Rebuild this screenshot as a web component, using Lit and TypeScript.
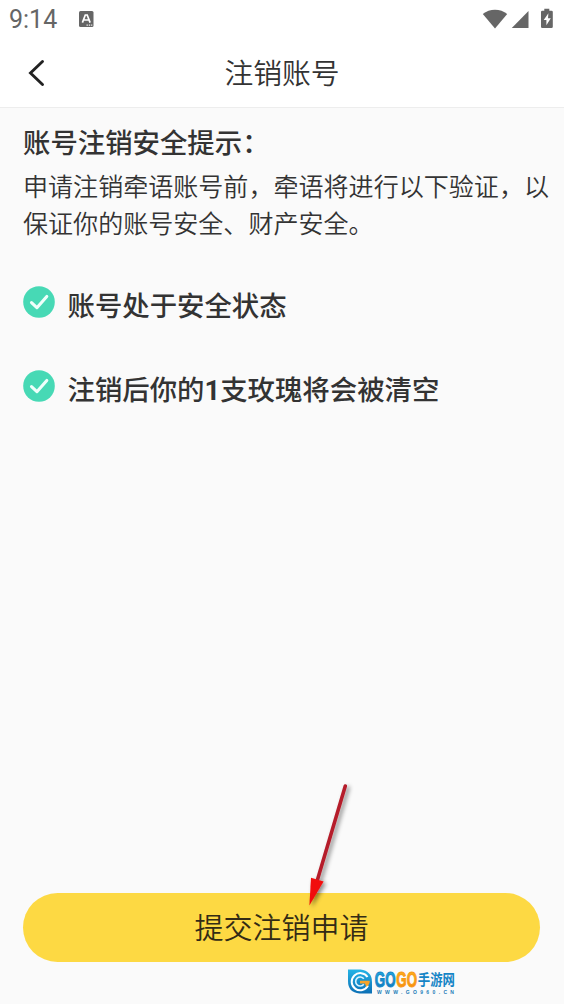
import { LitElement, html, css } from "lit";
import { customElement } from "lit/decorators.js";

@customElement("app-root")
class AppRoot extends LitElement {
  static styles = css`
    :host {
      display: flex;
      flex-direction: column;
      position: relative;
      box-sizing: border-box;
      width: 100%;
      height: 100vh;
      overflow: hidden;
      background: #fafafa;
      color: #333;
      font-family: "Noto Sans CJK SC", "Noto Sans", sans-serif;
    }
    svg { display: block; flex: none; }
    .status {
      display: flex;
      align-items: center;
      height: 38px;
      padding: 0 10px 0 9px;
      background: #fff;
      color: #666;
    }
    .time { font: 25px/38px Roboto, sans-serif; width: 69px; padding-top: 2px; }
    .spacer { flex: 1; }
    .nav {
      display: grid;
      grid-template-columns: 64px 1fr 64px;
      align-items: center;
      height: 69px;
      background: #fff;
      border-bottom: 1px solid #ededed;
    }
    .back { padding-left: 28px; }
    .title { font-size: 28.8px; line-height: 67px; padding-bottom: 2px; text-align: center; font-weight: 350; }
    .content { flex: 1; padding: 13px 12px 0 23px; }
    .strong {
      font-size: 27.4px;
      line-height: 40px;
      font-weight: 500;
      white-space: nowrap;
    }
    .desc { font-size: 25.05px; line-height: 36.6px; font-weight: 350; margin: 6px 0 0; }
    .checks { display: grid; gap: 44px; padding-top: 44px; }
    .check { display: flex; gap: 12.5px; align-items: flex-start; height: 40px; }
    .check svg { margin-top: 2px; }
    .num { font-family: Roboto, sans-serif; font-weight: 700; }
    .submit {
      margin: 0 24px 42px 23px;
      height: 69px;
      border: 0;
      padding: 0 0 2px;
      border-radius: 35px;
      background: #fdd943;
      color: #332b15;
      font: 350 29px/67px "Noto Sans CJK SC", sans-serif;
    }
    .arrow { position: absolute; left: 300px; top: 778px; }
    .mark { position: absolute; left: 346px; top: 966px; }
    .gogo { font: 700 21.5px "Liberation Sans", sans-serif; }
    .cn { font: 700 13px "Noto Sans CJK SC", sans-serif; }
    .url { font: 700 5px "Liberation Sans", sans-serif; }
  `;

  private check(label: unknown) {
    return html`<div class="check">
      <svg width="32" height="32" viewBox="0 0 32 32">
        <circle cx="16" cy="16" r="15.8" fill="#47d9b5" />
        <path d="M8.500 16.600l5.400 5.100L23.800 10.400" fill="none" stroke="#effffb" stroke-width="3.100" stroke-linecap="round" stroke-linejoin="round" />
      </svg>
      <div class="strong">${label}</div>
    </div>`;
  }

  render() {
    return html`
      <div class="status">
        <div class="time">9:14</div>
        <svg width="16" height="17" viewBox="0 0 16 17">
          <rect x="1" y="0" width="14.5" height="16" rx="1.5" fill="#666" />
          <path d="M4.4 11.600L7.300 4h1.900l2.900 7.600M5.600 9h5.200" fill="none" stroke="#fff" stroke-width="1.700" />
          <path d="M8.500 14.200h1.400m.9 0h1.400m.9 0h1.200" stroke="#eee" stroke-width="1.200" />
        </svg>
        <div class="spacer"></div>
        <svg width="72" height="24" viewBox="0 0 72 24">
          <path d="M0.8 7.1C7.500 1.300 18.500 1.300 25.200 7.100L13 21.400z" fill="#666" />
          <path d="M29.800 21L46.500 4.100V21z" fill="#666" />
          <path d="M62.300 1.800h5v2h2.200q1.300 0 1.300 1.300v14.700q0 1.300-1.300 1.300h-9.200q-1.300 0-1.300-1.300V5.100q0-1.300 1.300-1.300h2z" fill="#666" />
          <path d="M66.400 6.300l-4.700 6.600h2.700v5.300l4.400-7h-2.800z" fill="#fff" />
        </svg>
      </div>
      <div class="nav">
        <div class="back">
          <svg width="18" height="28" viewBox="0 0 18 28">
            <path d="M14.500 2.500L2.500 14l12 11.500" fill="none" stroke="#222" stroke-width="2.900" stroke-linecap="round" />
          </svg>
        </div>
        <div class="title">注销账号</div>
      </div>
      <div class="content">
        <div class="strong">账号注销安全提示：</div>
        <p class="desc">申请注销牵语账号前，牵语将进行以下验证，以保证你的账号安全、财产安全。</p>
        <div class="checks">
          ${this.check("账号处于安全状态")}
          ${this.check(html`注销后你的<span class="num">1</span>支玫瑰将会被清空`)}
        </div>
      </div>
      <button class="submit">提交注销申请</button>
      <svg class="arrow" width="60" height="136" viewBox="0 0 60 136">
        <defs>
          <filter id="shade" x="-50%" y="-20%" width="200%" height="140%">
            <feDropShadow dx="2.500" dy="2" stdDeviation="2" flood-color="#000" flood-opacity=".45" />
          </filter>
        </defs>
        <g filter="url(#shade)">
          <path d="M45.300 8L16.800 104" stroke="#b51f2b" stroke-width="3.600" stroke-linecap="round" />
          <path d="M11 99.800L23.600 103.600L9.400 127.400z" fill="#f10d0d" />
        </g>
      </svg>
      <svg class="mark" width="112" height="32" viewBox="0 0 112 32">
        <defs>
          <linearGradient id="blue" x1="0" y1="0" x2="0" y2="1">
            <stop offset="0" stop-color="#25b4e6" /><stop offset="1" stop-color="#0c6fb5" />
          </linearGradient>
          <linearGradient id="gold" x1="0" y1="0" x2="0" y2="1">
            <stop offset="0" stop-color="#ffb61b" /><stop offset="1" stop-color="#f6860e" />
          </linearGradient>
        </defs>
        <path d="M2 3.500h12.500q11.500 1.500 11.500 12.500v11.500H13.500Q2 26.500 2 15z" fill="url(#blue)" />
        <path d="M21.500 11A8.600 8.600 0 1 0 22 19.500" fill="none" stroke="#fff" stroke-width="2" />
        <path d="M17.800 12.800A4.500 4.500 0 1 0 17.800 18.200" fill="none" stroke="#d8f2ff" stroke-width="1.600" />
        <path d="M14 14.800h9.800q0 4-3.500 6l-1.500-3.200H14z" fill="#f7a42b" />
        <text class="gogo" transform="translate(28.800 20.800) scale(.62 1)" fill="url(#blue)" stroke="#1687c8" stroke-width="1">GO</text>
        <text class="gogo" transform="translate(50.300 20.800) scale(.62 1)" fill="url(#gold)" stroke="#f89a15" stroke-width="1">GO</text>
        <text class="cn" transform="translate(71.800 19.200) scale(.95 1.100)" fill="#1485c6">手游网</text>
        <text class="url" x="31" y="27.700" textLength="77" fill="#1c7bb8">WWW.GO960.CN</text>
      </svg>
    `;
  }
}
